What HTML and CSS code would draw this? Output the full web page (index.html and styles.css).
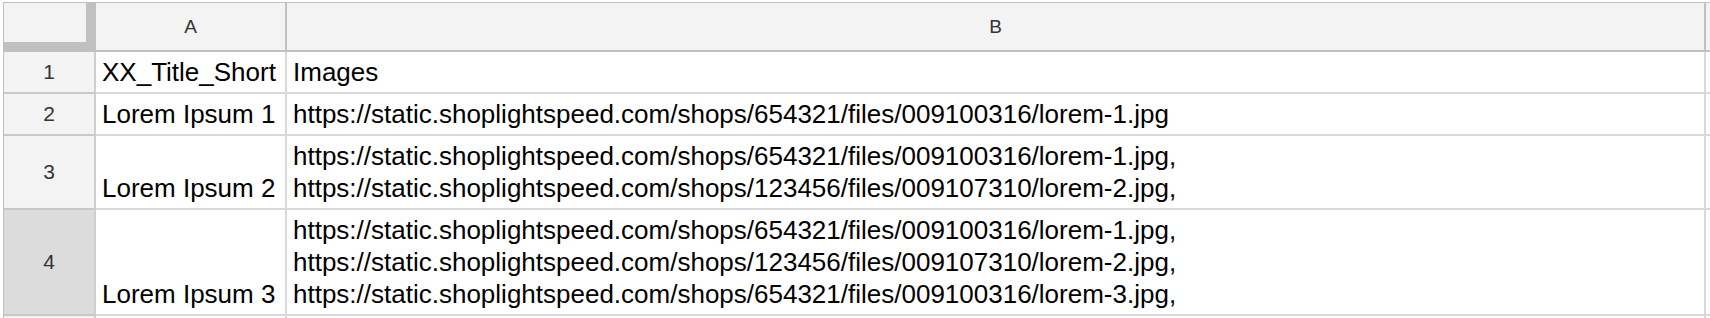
FILE: index.html
```html
<!DOCTYPE html>
<html lang="en">
<head>
<meta charset="utf-8">
<title>Sheet</title>
<link rel="stylesheet" href="styles.css">
</head>
<body>
<div class="sheet">
  <div class="corner"></div>
  <div class="colhead">A</div>
  <div class="colhead">B</div>
  <div class="colhead colhead-tail"></div>

  <div class="rowhead">1</div>
  <div class="cell">XX_Title_Short</div>
  <div class="cell">Images</div>
  <div class="cell cell-tail"></div>

  <div class="rowhead">2</div>
  <div class="cell">Lorem Ipsum 1</div>
  <div class="cell">https://static.shoplightspeed.com/shops/654321/files/009100316/lorem-1.jpg</div>
  <div class="cell cell-tail"></div>

  <div class="rowhead">3</div>
  <div class="cell">Lorem Ipsum 2</div>
  <div class="cell"><div class="lines"><span>https://static.shoplightspeed.com/shops/654321/files/009100316/lorem-1.jpg,</span><span>https://static.shoplightspeed.com/shops/123456/files/009107310/lorem-2.jpg,</span></div></div>
  <div class="cell cell-tail"></div>

  <div class="rowhead rowhead-selected">4</div>
  <div class="cell">Lorem Ipsum 3</div>
  <div class="cell"><div class="lines"><span>https://static.shoplightspeed.com/shops/654321/files/009100316/lorem-1.jpg,</span><span>https://static.shoplightspeed.com/shops/123456/files/009107310/lorem-2.jpg,</span><span>https://static.shoplightspeed.com/shops/654321/files/009100316/lorem-3.jpg,</span></div></div>
  <div class="cell cell-tail"></div>

  <div class="rowhead"></div>
  <div class="cell"></div>
  <div class="cell"></div>
  <div class="cell cell-tail"></div>
</div>
</body>
</html>
```

FILE: styles.css
```css
* {
  box-sizing: border-box;
}

html, body {
  margin: 0;
  padding: 0;
  background: #ffffff;
  height: 318px;
  overflow: hidden;
}

.sheet {
  margin-top: 2px;
  margin-left: 3px;
  border-top: 1px solid #c0c0c0;
  border-left: 1px solid #c0c0c0;
  display: grid;
  grid-template-columns: 92px 191px 1419px 1fr;
  font-family: "Liberation Sans", Arial, sans-serif;
}

.corner {
  height: 49px;
  background: #f3f3f3;
  border-right: 2px solid #c0c0c0;
  border-bottom: 2px solid #c0c0c0;
  box-shadow: inset -8px -8px 0 #c0c0c0;
}

.colhead {
  height: 49px;
  background: #f3f3f3;
  border-right: 2px solid #c0c0c0;
  border-bottom: 2px solid #c0c0c0;
  display: flex;
  align-items: center;
  justify-content: center;
  font-size: 19px;
  color: #333333;
}

.colhead-tail {
  border-right: none;
}

.rowhead {
  background: #f3f3f3;
  border-right: 2px solid #cfcfcf;
  border-bottom: 2px solid #c8c8c8;
  display: flex;
  align-items: center;
  justify-content: center;
  font-size: 21px;
  color: #333333;
}

.rowhead-selected {
  background: #dcdcdc;
}

.cell {
  min-height: 42px;
  padding: 4px 6px;
  border-right: 2px solid #d9d9d9;
  border-bottom: 2px solid #d9d9d9;
  display: flex;
  align-items: flex-end;
  font-size: 26px;
  line-height: 32px;
  color: #000000;
  white-space: nowrap;
}

.cell-tail {
  border-right: none;
}

.lines {
  display: flex;
  flex-direction: column;
}
```
